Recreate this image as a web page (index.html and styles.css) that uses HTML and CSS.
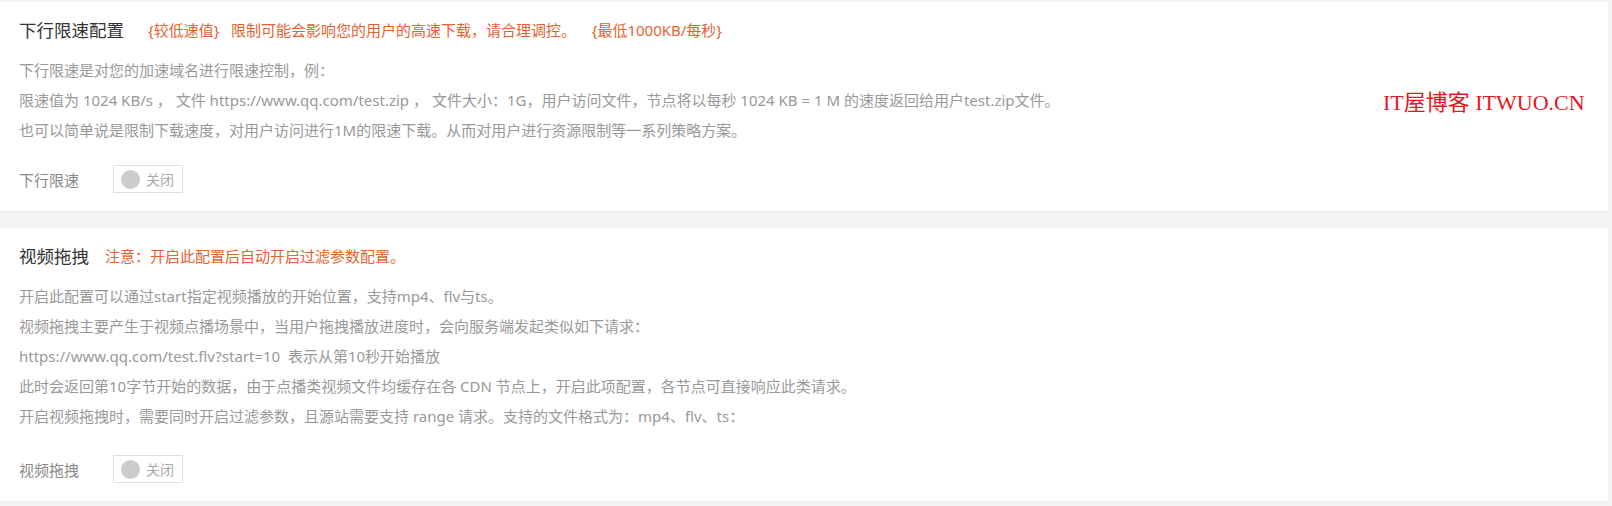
FILE: index.html
```html
<!DOCTYPE html>
<html lang="zh-CN">
<head>
  <meta charset="UTF-8" />
  <title>CDN 配置</title>
  <link rel="stylesheet" href="styles.css">
</head>
<body>
  <div class="panel">
    <div class="panel-head">
      <h3>下行限速配置</h3>
      <span class="tip">{较低速值}&nbsp;&nbsp; 限制可能会影响您的用户的高速下载，请合理调控。&nbsp;&nbsp;&nbsp; {最低1000KB/每秒}</span>
    </div>
    <div class="desc">
      <p>下行限速是对您的加速域名进行限速控制，例：</p>
      <p>限速值为 1024 KB/s ， 文件 https://www.qq.com/test.zip ， 文件大小：1G，用户访问文件，节点将以每秒 1024 KB = 1 M 的速度返回给用户test.zip文件。</p>
      <p>也可以简单说是限制下载速度，对用户访问进行1M的限速下载。从而对用户进行资源限制等一系列策略方案。</p>
    </div>
    <div class="form-row">
      <label>下行限速</label>
      <span class="switch"><i class="dot"></i>关闭</span>
    </div>
  </div>

  <div class="panel">
    <div class="panel-head">
      <h3>视频拖拽</h3>
      <span class="tip tip-near">注意：开启此配置后自动开启过滤参数配置。</span>
    </div>
    <div class="desc">
      <p>开启此配置可以通过start指定视频播放的开始位置，支持mp4、flv与ts。</p>
      <p>视频拖拽主要产生于视频点播场景中，当用户拖拽播放进度时，会向服务端发起类似如下请求：</p>
      <p>https://www.qq.com/test.flv?start=10&nbsp; 表示从第10秒开始播放</p>
      <p>此时会返回第10字节开始的数据，由于点播类视频文件均缓存在各 CDN 节点上，开启此项配置，各节点可直接响应此类请求。</p>
      <p>开启视频拖拽时，需要同时开启过滤参数，且源站需要支持 range 请求。支持的文件格式为：mp4、flv、ts：</p>
    </div>
    <div class="form-row form-row-wide">
      <label>视频拖拽</label>
      <span class="switch"><i class="dot"></i>关闭</span>
    </div>
  </div>

  <div class="watermark">IT屋博客 ITWUO.CN</div>
</body>
</html>
```

FILE: styles.css
```css
body {
  margin: 0;
  padding: 2px 4px 0 0;
  background: #f4f4f4;
  font-family: "Noto Sans", "Noto Sans CJK SC", sans-serif;
  color: #999;
}

/* Card */
.panel {
  background: #fff;
  padding: 14px 19px 18px;
  margin-bottom: 17px;
  box-shadow: 0 1px 2px rgba(0, 0, 0, 0.04);
}

.panel-head {
  display: flex;
  align-items: center;
  height: 26px;
}

.panel-head h3 {
  margin: 0;
  font-size: 17.5px;
  font-weight: normal;
  color: #333;
}

.tip {
  margin-left: 24px;
  font-size: 15px;
  color: #e6622f;
}

.tip-near {
  margin-left: 16px;
}

.desc {
  margin-top: 13px;
}

.desc p {
  margin: 0;
  font-size: 15px;
  line-height: 30px;
  color: #999;
}

/* Switch row */
.form-row {
  display: flex;
  align-items: center;
  margin-top: 20px;
}

.form-row-wide {
  margin-top: 24px;
}

.form-row label {
  width: 94px;
  font-size: 15px;
  color: #888;
}

.switch {
  display: inline-flex;
  align-items: center;
  gap: 6px;
  box-sizing: border-box;
  width: 70px;
  height: 28px;
  padding: 0 7px;
  border: 1px solid #ddd;
  font-size: 14px;
  color: #aaa;
}

.switch .dot {
  width: 19px;
  height: 19px;
  border-radius: 50%;
  background: #ccc;
}

.watermark {
  position: absolute;
  top: 84px;
  left: 1383px;
  font-family: "Liberation Serif", "Noto Sans CJK SC", serif;
  font-size: 22px;
  color: #e8141e;
}
```
